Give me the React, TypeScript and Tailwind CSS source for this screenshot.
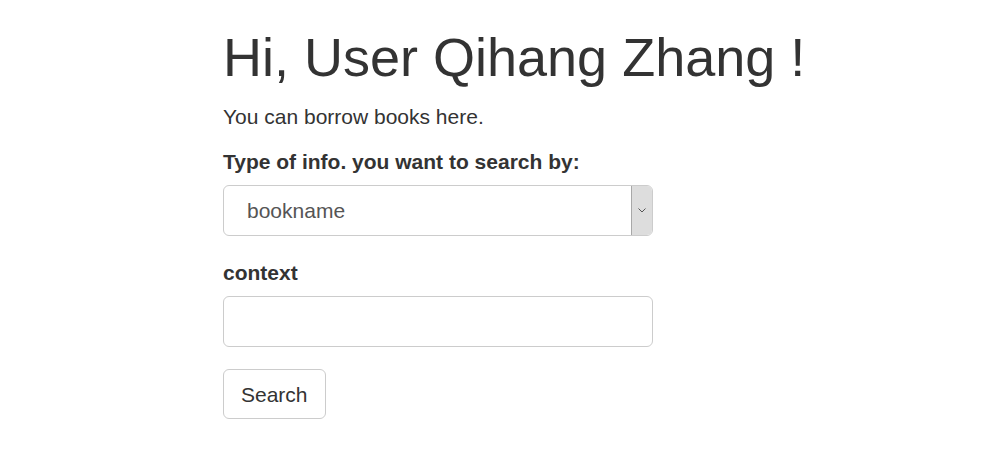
const App = () => {
  return (
    <div className="min-h-screen bg-white font-['Liberation_Sans',Arial,sans-serif] text-[#333]">
      <div className="pl-[223px] pt-[28px]">
        <h1 className="text-[54px] font-normal leading-[1.1] mb-[15px]">Hi, User Qihang Zhang !</h1>
        <p className="text-[21px] leading-[30px] mb-[15px]">You can borrow books here.</p>

        <form className="w-[430px]" onSubmit={(e) => e.preventDefault()}>
          <div className="mb-[22px] flex flex-col items-start">
            <label className="text-[21px] leading-[30px] font-bold mb-[8px]">Type of info. you want to search by:</label>
            <div className="relative w-full">
              <select className="block h-[51px] w-full appearance-none rounded-[6px] border border-[#ccc] bg-white pl-[23px] pr-[30px] text-[21px] text-[#555] outline-none">
                <option>bookname</option>
                <option>author</option>
                <option>ISBN</option>
              </select>
              {/* native-looking dropdown button */}
              <div className="pointer-events-none absolute right-[1px] top-[1px] bottom-[1px] flex w-[21px] items-center justify-center rounded-r-[5px] border-l border-[#a8a8a8] bg-[#dddddd]">
                <svg width="8" height="5" viewBox="0 0 8 5" fill="none">
                  <path d="M0.5 0.5L4 4L7.5 0.5" stroke="#555" strokeWidth="1" />
                </svg>
              </div>
            </div>
          </div>

          <div className="mb-[22px] flex flex-col items-start">
            <label className="text-[21px] leading-[30px] font-bold mb-[8px]">context</label>
            <input type="text" className="block h-[51px] w-full rounded-[6px] border border-[#ccc] bg-white px-[18px] text-[21px] text-[#555] outline-none" />
          </div>

          <button type="submit" className="h-[50px] rounded-[6px] border border-[#ccc] bg-white px-[17px] text-[21px] text-[#333]">
            Search
          </button>
        </form>
      </div>
    </div>
  )
}

export default App
